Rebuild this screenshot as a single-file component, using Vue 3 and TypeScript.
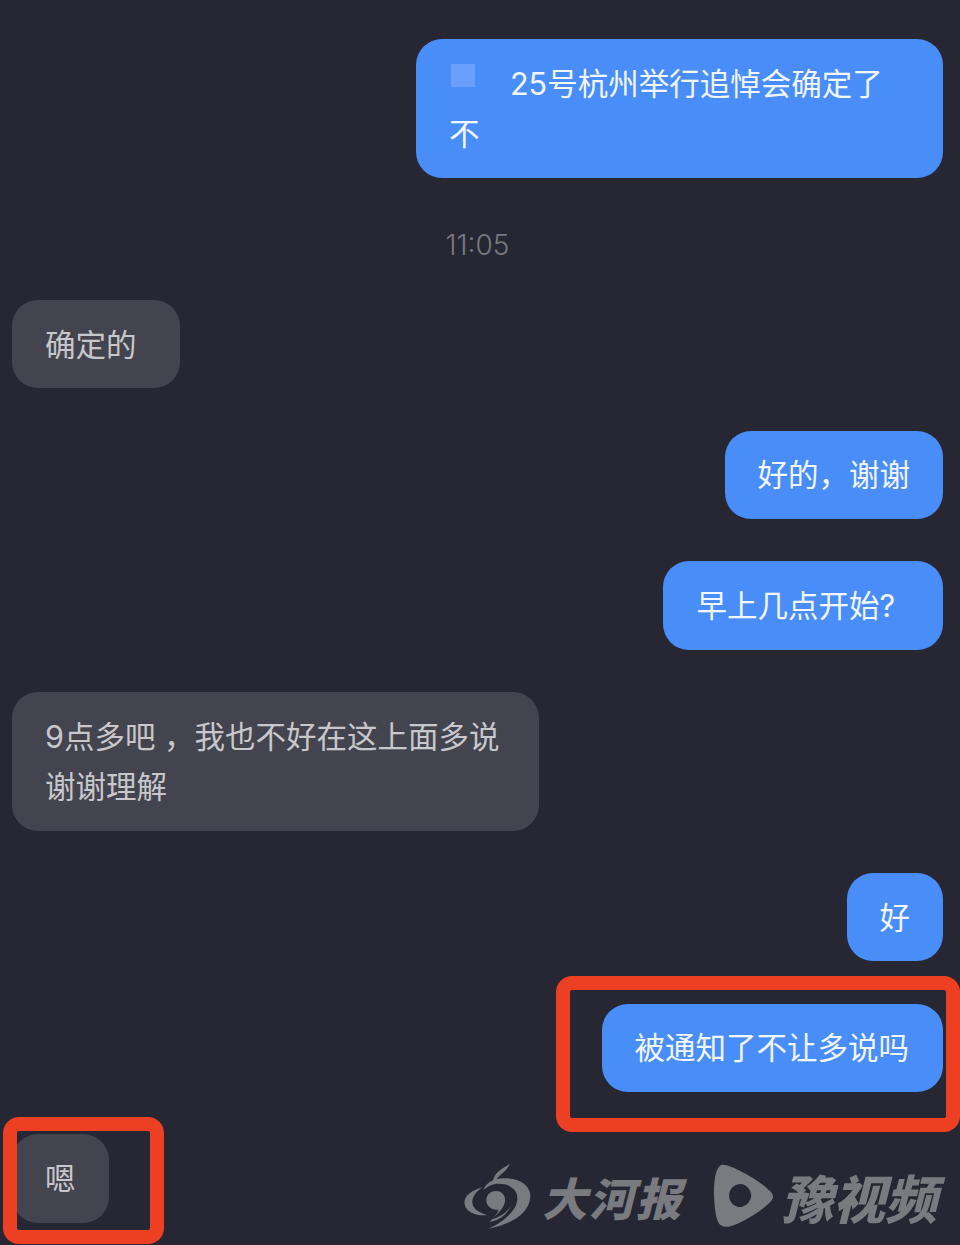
<script setup lang="ts">
interface Message {
  side: "left" | "right";
  lines: string[];
  // trailing space the original bubbles keep after their text
  tail?: number;
}

const messages: Message[] = [
  { side: "left", lines: ["确定的"], tail: 10 },
  { side: "right", lines: ["好的，谢谢"] },
  { side: "right", lines: ["早上几点开始?"], tail: 15 },
  { side: "left", lines: ["9点多吧 ，我也不好在这上面多说", "谢谢理解"], tail: 6 },
  { side: "right", lines: ["好"] },
  { side: "right", lines: ["被通知了不让多说吗"], tail: 1 },
  { side: "left", lines: ["嗯"] },
];
</script>

<template>
  <div class="chat">
    <div class="row right">
      <div class="bubble first">
        <span class="emoji"></span>25号杭州举行追悼会确定了<br />不
      </div>
    </div>

    <div class="time">11:05</div>

    <div v-for="(msg, i) in messages" :key="i" class="row msg" :class="msg.side">
      <div class="bubble" :style="{ paddingRight: 33 + (msg.tail ?? 0) + 'px' }">
        <template v-for="(line, j) in msg.lines" :key="j">
          <br v-if="j > 0" />{{ line }}
        </template>
      </div>
    </div>

    <div class="mark mark-right"></div>
    <div class="mark mark-left"></div>

    <div class="watermark">
      <svg class="swirl" viewBox="70 60 210 210" aria-hidden="true">
        <path d="M128 139C92 150 68 168 76 194C82 214 112 226 142 222C116 214 96 200 98 180C100 164 112 150 128 139Z" />
        <path d="M211 68C190 82 166 92 160 118C146 124 136 134 130 148C146 132 170 124 194 130C222 136 238 156 232 182C226 212 190 244 146 263C206 252 268 222 272 168C274 136 244 112 198 112C186 112 176 113 170 115C180 100 200 92 211 68Z" />
        <path d="M168 150C186 150 198 162 196 180C194 198 180 212 158 234C178 230 202 214 214 194C204 218 180 240 150 242C170 222 176 212 176 206C154 208 140 194 140 178C140 162 152 150 168 150Z" />
      </svg>
      <span class="daily">大河报</span>
      <svg class="play" viewBox="820 80 182 190" aria-hidden="true">
        <path
          fill-rule="evenodd"
          d="M846 82C860 80 880 90 900 100C940 120 972 142 990 160C1002 172 1002 182 990 194C968 216 934 238 896 256C874 266 856 270 846 264C832 258 826 232 823 176C822 128 828 88 846 82ZM902 139C884 139 868 154 868 174C868 194 884 208 902 208C918 206 934 190 934 174C934 156 918 139 902 139Z"
        />
      </svg>
      <span class="video">豫视频</span>
    </div>
  </div>
</template>

<style scoped>
.chat {
  position: relative;
  box-sizing: border-box;
  width: 960px;
  height: 1245px;
  padding: 39px 17px 0 12px;
  overflow: hidden;
  background: #262732;
  font-family: Inter, "Noto Sans CJK SC", sans-serif;
  font-size: 30.5px;
  font-weight: 400;
}

.row {
  display: flex;
}

.row.right {
  justify-content: flex-end;
}

.msg + .msg {
  margin-top: 42.4px;
}

.bubble {
  box-sizing: border-box;
  padding: 19.6px 33px 18.4px;
  border-radius: 26px;
  line-height: 50.3px;
  white-space: nowrap;
}

.left .bubble {
  background: #43444e;
  color: #c8c8cc;
}

.right .bubble {
  background: #498ef8;
  color: #f1f6ff;
}

.bubble.first {
  width: 527px;
  padding-top: 20px;
  padding-bottom: 18px;
}

.emoji {
  display: inline-block;
  width: 24px;
  height: 23px;
  margin: 0 35px 0 2px;
  vertical-align: 8px;
  background: #6a9ffb;
}

.time {
  margin: 49px 0 37.4px;
  height: 36px;
  line-height: 36px;
  text-align: center;
  font-size: 28px;
  font-weight: 300;
  color: #787980;
}

.mark {
  position: absolute;
  box-sizing: border-box;
  border: 14px solid #ed4023;
  border-radius: 16px;
}

.mark-right {
  left: 556px;
  top: 976px;
  width: 404px;
  height: 156px;
}

.mark-left {
  left: 3px;
  top: 1117px;
  width: 161px;
  height: 127px;
}

.watermark {
  position: absolute;
  left: 463px;
  top: 1160px;
  display: flex;
  align-items: center;
  width: 484px;
  height: 72px;
  color: #7a7b80;
  fill: #7a7b80;
}

.swirl {
  width: 70px;
  height: 70px;
  flex: none;
}

.daily {
  margin-left: 9px;
  font-size: 45px;
  font-weight: 900;
  font-style: italic;
  letter-spacing: 2px;
  white-space: nowrap;
}

.play {
  width: 61px;
  height: 64px;
  margin-left: 30px;
  flex: none;
}

.video {
  margin-left: 7px;
  font-size: 52px;
  font-weight: 900;
  font-style: italic;
  white-space: nowrap;
}
</style>

<style>
html,
body {
  margin: 0;
  background: #262732;
}
</style>
